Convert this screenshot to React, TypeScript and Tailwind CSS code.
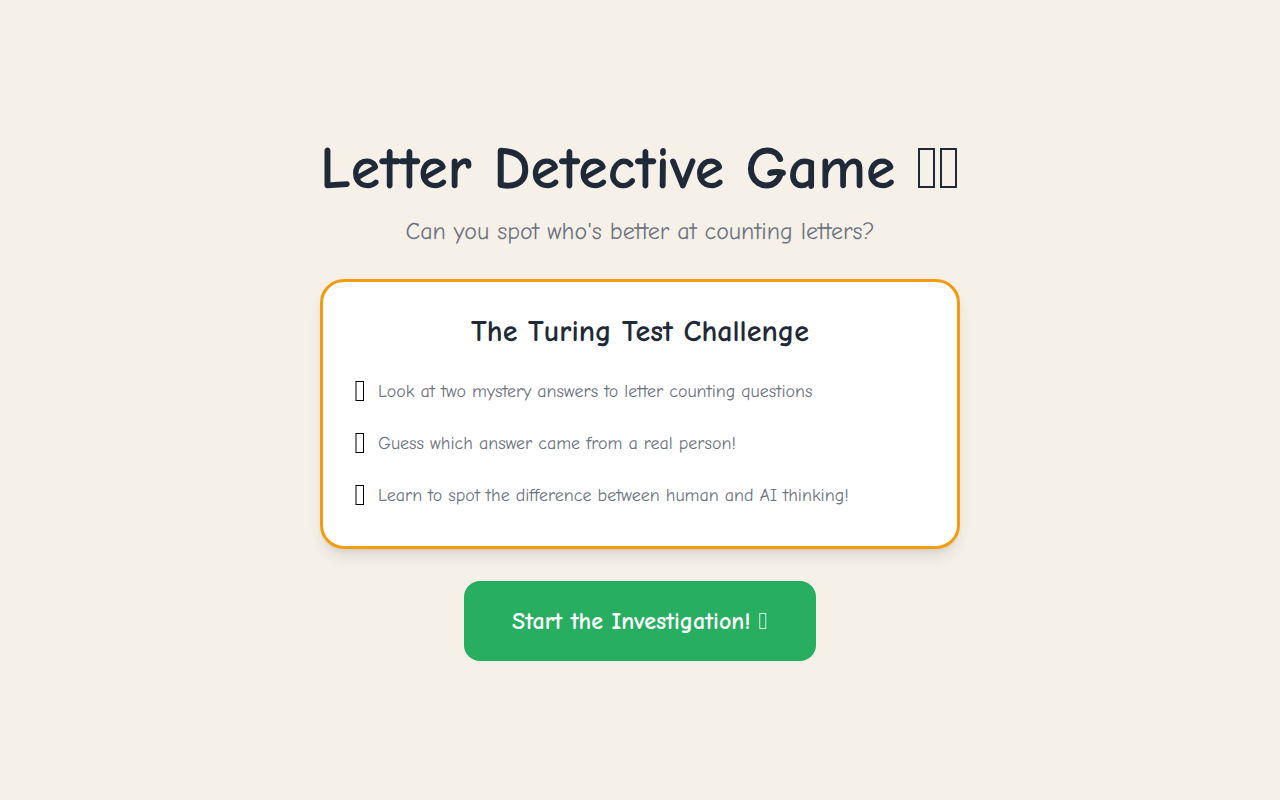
import clsx from 'clsx'

const STEPS = [
  'Look at two mystery answers to letter counting questions',
  'Guess which answer came from a real person!',
  'Learn to spot the difference between human and AI thinking!',
]

// Hollow upright box used as the decorative glyph, drawn in the current text colour
function Glyph({ className }: { className?: string }) {
  return (
    <svg
      aria-hidden="true"
      viewBox="0 0 22 40"
      className={clsx('inline-block align-baseline', className)}
      fill="none"
      stroke="currentColor"
      strokeWidth="2"
    >
      <rect x="2" y="1" width="15" height="38" />
    </svg>
  )
}

export default function App() {
  return (
    <div className="min-h-screen bg-[#f5f0e8] flex items-center justify-center p-4 font-['Comic_Neue','Comic_Sans_MS',cursive] [text-rendering:geometricPrecision]">
      <main className="w-full max-w-2xl px-4 text-center">
        <h1 className="text-6xl font-bold text-[#1f2937] mb-4 sm:whitespace-nowrap">
          Letter Detective Game <Glyph className="h-10" /><Glyph className="h-10" />
        </h1>
        <p className="text-2xl text-[#6b7280] mb-8">Can you spot who's better at counting letters?</p>

        <section className="bg-white border-3 border-[#f39c12] rounded-3xl p-8 mb-8 shadow-lg">
          <h2 className="text-3xl font-bold text-[#1f2937] mb-6">The Turing Test Challenge</h2>
          <ul className="space-y-4 text-left">
            {STEPS.map((step) => (
              <li key={step} className="flex items-center gap-3">
                <span className="text-3xl"><Glyph className="h-5" /></span>
                <span className="text-lg text-[#6b7280]">{step}</span>
              </li>
            ))}
          </ul>
        </section>

        <button type="button" className="bg-[#27ae60] text-white text-2xl font-bold rounded-2xl px-12 py-6">
          Start the Investigation! <Glyph className="h-4" />
        </button>
      </main>
    </div>
  )
}
